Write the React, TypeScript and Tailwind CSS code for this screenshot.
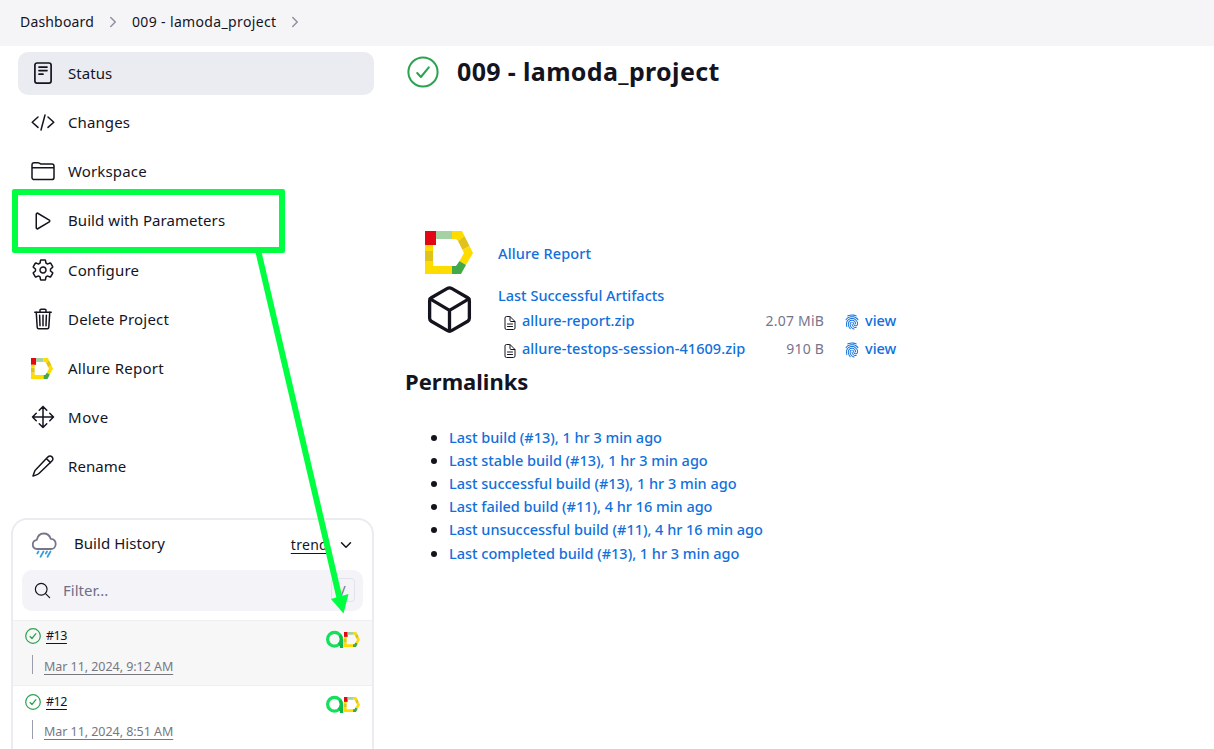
import type { ReactNode } from "react";
import {
  IoChevronDownOutline,
  IoChevronForwardOutline,
  IoCubeOutline,
  IoDocumentTextOutline,
  IoFingerPrint,
  IoMoveOutline,
  IoPlayOutline,
  IoSearchOutline,
  IoSettingsOutline,
  IoTrashOutline,
} from "react-icons/io5";

function StatusIcon() {
  return (
    <svg viewBox="0 0 24 24" className="size-6" fill="none" stroke="currentColor" strokeWidth="1.7" strokeLinecap="round" strokeLinejoin="round">
      <rect x="3.900" y="2" width="16.200" height="20.200" rx="2.200" />
      <path d="M8 6.100h8M8 9.600h8M8 13.200h4" />
    </svg>
  );
}

function ChangesIcon() {
  return (
    <svg viewBox="0 0 24 24" className="size-6" fill="none" stroke="currentColor" strokeWidth="1.5" strokeLinecap="round" strokeLinejoin="round">
      <path d="M7 7 1.200 12.200 7 17.400M17 7l5.800 5.200-5.800 5.200M14 5l-4 15" />
    </svg>
  );
}

function FolderIcon() {
  return (
    <svg viewBox="0 0 24 24" className="size-6" fill="none" stroke="currentColor" strokeWidth="1.5" strokeLinecap="round" strokeLinejoin="round">
      <path d="M1 8.700V5.900a2.200 2.200 0 0 1 2.200-2.200h3.600c.6 0 1 .1 1.500.5l.8.5c.5.3.9.4 1.500.4h10.200A2.200 2.200 0 0 1 23 7.300v11.100a2.200 2.200 0 0 1-2.200 2.200H3.200A2.200 2.200 0 0 1 1 18.400V8.700h22" />
    </svg>
  );
}

function PencilIcon() {
  return (
    <svg viewBox="0 0 24 24" className="size-6" fill="none" stroke="currentColor" strokeWidth="1.5" strokeLinecap="round" strokeLinejoin="round">
      <path d="M16.800 2.100c1.500-1.500 3-1.300 4.200-.2 1.200 1.200 1.300 2.700-.1 4.100L8.200 18.300c-.6.600-1.300 1-2.100 1.300L2 21.100l1.400-4.200c.3-.8.7-1.500 1.300-2.100ZM15.600 3.700l3.900 3.900" />
    </svg>
  );
}

function AllureIcon({ className }: { className: string }) {
  return (
    <svg viewBox="0 0 48 43" className={className} preserveAspectRatio="none">
      <path d="M0 0h11v14H0z" fill="#e30613" />
      <path d="M11 0h16v8H11z" fill="#a5d2a4" />
      <path d="M27 0h10l2.500 5-6.500 5-2-2h-4z" fill="#ffdc00" />
      <path d="m39.500 5 5 10-7 4-4.500-9z" fill="#dfc21a" />
      <path d="m44.500 15 3.500 7-7 12-6.500-4 4.500-8-1.500-3z" fill="#ffdc00" />
      <path d="m41 34-5 9H27v-8h4l3.500-5z" fill="#43a847" />
      <path d="M0 14h8v6H0zM0 30h8v5h19v8H0z" fill="#ffdc00" />
      <path d="M0 20h8v10H0z" fill="#dfc21a" />
    </svg>
  );
}

function SuccessIcon({ className, width }: { className: string; width: number }) {
  return (
    <svg viewBox="0 0 32 32" className={className} fill="none" stroke="#2aa34f" strokeWidth={width} strokeLinecap="round" strokeLinejoin="round">
      <circle cx="16" cy="16" r="14.600" />
      <path d="m10.200 17 3.700 4L21.800 11.300" />
    </svg>
  );
}

function RainIcon() {
  return (
    <svg viewBox="0 0 26 28" className="h-7 w-[26px]" fill="none" strokeLinecap="round" strokeLinejoin="round">
      <path d="M6 18C3 18 1.800 16 1.800 13.500c0-2.500 1.500-4.300 4-4.700C6.600 5 9 2.500 12.700 2.500c3.500 0 6 2.100 7 5.300 3.200.2 5 2.300 5 5.100 0 3-2 5.100-5 5.100Z" stroke="#77758c" strokeWidth="1.800" />
      <path d="m7.500 20.500-1.200 2M12.500 20.500l-3 5.300M16 20.500l-1.200 2M19.500 20.500l-3 5.300" stroke="#3aa0dc" strokeWidth="1.800" />
    </svg>
  );
}

function TestOpsIcon() {
  return (
    <svg viewBox="0 0 18 19" className="h-[19px] w-[18px]" fill="none">
      <circle cx="8.500" cy="9.300" r="6.900" stroke="#14e05c" strokeWidth="3.200" />
      <path d="M15.600 9.500V18" stroke="#0cb54b" strokeWidth="3.200" />
      <path d="M14 5.200a6.900 6.900 0 0 1-1.200 9.500" stroke="#0fbe4f" strokeWidth="3.200" />
    </svg>
  );
}

const tasks: { label: string; icon: ReactNode; tracking: string }[] = [
  { label: "Status", icon: <StatusIcon />, tracking: "tracking-[0.05px]" },
  { label: "Changes", icon: <ChangesIcon />, tracking: "tracking-[0.1px]" },
  { label: "Workspace", icon: <FolderIcon />, tracking: "tracking-[0.15px]" },
  { label: "Build with Parameters", icon: <IoPlayOutline className="size-6" />, tracking: "tracking-[0.07px]" },
  { label: "Configure", icon: <IoSettingsOutline className="size-6" />, tracking: "tracking-[0.15px]" },
  { label: "Delete Project", icon: <IoTrashOutline className="size-6" />, tracking: "tracking-[0.18px]" },
  { label: "Allure Report", icon: <AllureIcon className="h-[21px] w-[22px]" />, tracking: "tracking-[0.26px]" },
  { label: "Move", icon: <IoMoveOutline className="size-6" />, tracking: "tracking-[0.6px]" },
  { label: "Rename", icon: <PencilIcon />, tracking: "tracking-[0.05px]" },
];

const links = [
  "Last build (#13), 1 hr 3 min ago",
  "Last stable build (#13), 1 hr 3 min ago",
  "Last successful build (#13), 1 hr 3 min ago",
  "Last failed build (#11), 4 hr 16 min ago",
  "Last unsuccessful build (#11), 4 hr 16 min ago",
  "Last completed build (#13), 1 hr 3 min ago",
];

const artifacts = [
  { name: "allure-report.zip", size: "2.07 MiB" },
  { name: "allure-testops-session-41609.zip", size: "910 B" },
];

function Build({ name, date, shaded }: { name: string; date: string; shaded?: boolean }) {
  return (
    <div className={`flex h-[65.500px] shrink-0 justify-between border-t border-[#efeff2] pr-[12px] pl-[12px] ${shaded ? "bg-[#f7f7f7]" : ""}`}>
      <div className="flex flex-col">
        <div className="mt-[6px] flex h-[19px] items-center gap-[5px]">
          <SuccessIcon className="size-4" width={2.4} />
          <span className="mt-px text-[12.500px] tracking-[-0.5px] underline underline-offset-[3px]">{name}</span>
        </div>
        <div className="mt-[8px] flex h-[24px] items-center pl-[7px]">
          <span className="mb-[3px] h-[19px] w-px bg-[#9c9caa]" />
          <span className="mt-[3px] ml-[11px] text-[12.500px] tracking-[-0.05px] text-[#77777f] underline underline-offset-[3px]">{date}</span>
        </div>
      </div>
      <div className="mt-[9px] flex h-[19px] items-center">
        <TestOpsIcon />
        <AllureIcon className="h-[15px] w-4" />
      </div>
    </div>
  );
}

export default function App() {
  return (
    <div className="relative flex h-[749px] w-[1214px] flex-col overflow-hidden bg-white font-['Noto_Sans',sans-serif] text-[15px] text-[#14141f]">
      <header className="flex h-[46px] shrink-0 items-center bg-[#f5f5f8] pb-[3px] pl-[20px] text-[14px]">
        <span className="tracking-[0.17px]">Dashboard</span>
        <IoChevronForwardOutline className="mx-[11px] size-4 text-[#8f8fa3]" />
        <span className="tracking-[0.35px]">009 - lamoda_project</span>
        <IoChevronForwardOutline className="mx-[11px] size-4 text-[#8f8fa3]" />
      </header>
      <div className="flex min-h-0 flex-1">
        <aside className="flex w-[374px] shrink-0 flex-col pt-[6px]">
          <nav className="flex flex-col gap-[6.200px] pl-[18px]">
            {tasks.map((t, i) => (
              <a key={t.label} className={`flex h-[43px] items-center rounded-[10px] pl-[13px] ${i === 0 ? "bg-[#ebecf2]" : ""}`}>
                <div className="flex w-[37px] items-center pb-px">{t.icon}</div>
                <span className={`pb-px ${t.tracking}`}>{t.label}</span>
              </a>
            ))}
          </nav>
          <section className="mt-[29.200px] ml-[11px] flex h-[260px] w-[363px] shrink-0 flex-col rounded-t-2xl border-2 border-[#ebebf0]">
            <div className="flex h-[50px] items-center pr-[18px] pl-[18px]">
              <RainIcon />
              <span className="ml-[17px] pb-[2px] tracking-[0.05px]">Build History</span>
              <span className="ml-auto pb-px text-[14px] tracking-[0.3px] underline underline-offset-[3px]">trend</span>
              <IoChevronDownOutline className="ml-[10px] size-4" />
            </div>
            <div className="mx-[9px] flex h-[41px] items-center rounded-[10px] bg-[#f3f3f8] pr-[8px] pl-[11px]">
              <IoSearchOutline className="size-[19px]" />
              <span className="mt-px ml-[11px] text-[#6f6e88]">Filter...</span>
              <div className="ml-auto flex size-6 items-center justify-center rounded-[4px] border border-[#e2e2ea] text-[14px] text-[#6f6e88]">/</div>
            </div>
            <div className="mt-[9px] flex flex-col">
              <Build name="#13" date="Mar 11, 2024, 9:12 AM" shaded />
              <Build name="#12" date="Mar 11, 2024, 8:51 AM" />
            </div>
          </section>
        </aside>
        <main className="flex flex-col pl-[31px]">
          <div className="mt-[6px] flex h-[40px] items-center pl-[2px]">
            <SuccessIcon className="size-8" width={2} />
            <h1 className="ml-[18px] text-[25px] font-bold tracking-[0.350px]">009 - lamoda_project</h1>
          </div>
          <div className="mt-[139px] flex h-[43px] items-center pl-[20px]">
            <AllureIcon className="h-[43px] w-[48px]" />
            <a className="mt-[2px] ml-[25px] text-[14.500px] font-medium tracking-[0.15px] text-[#1070dc]">Allure Report</a>
          </div>
          <div className="mt-[10px] flex pl-[18px]">
            <IoCubeOutline className="-mt-px size-[53px]" />
            <div className="ml-[22px] flex flex-col text-[14.500px] font-medium text-[#1070dc]">
              <a className="h-[23px] leading-[23px]">Last Successful Artifacts</a>
              {artifacts.map((a) => (
                <div key={a.name} className="flex h-[28px] w-[399px] items-center pb-px pl-[4px]">
                  <IoDocumentTextOutline className="mt-[5px] size-4 text-[#14141f]" />
                  <a className="ml-[4px] tracking-[0.06px]">{a.name}</a>
                  <span className="ml-auto pb-px text-[14px] font-normal tracking-[0.2px] text-[#77758c]">{a.size}</span>
                  <IoFingerPrint className="mt-[3px] ml-[20px] size-4" />
                  <a className="ml-[5px] w-[32px]">view</a>
                </div>
              ))}
            </div>
          </div>
          <h2 className="mt-px text-[22px] leading-[34px] font-bold">Permalinks</h2>
          <ul className="mt-[28px] flex flex-col">
            {links.map((l) => (
              <li key={l} className="flex h-[23.200px] items-center pl-[26px]">
                <div className="size-[6px] rounded-full bg-[#14141f]" />
                <a className="ml-[12px] text-[14.500px] font-medium tracking-[-0.02px] text-[#1070dc]">{l}</a>
              </li>
            ))}
          </ul>
        </main>
      </div>
      <div className="absolute top-[189px] left-[12px] h-[64px] w-[273px] rounded-[2px] border-6 border-[#00ff41]" />
      <svg className="absolute top-0 left-0 h-[749px] w-[400px]" viewBox="0 0 400 749">
        <path d="M258 250 340 600" stroke="#00ff41" strokeWidth="6" />
        <path d="m331 599 17.500-5L343.500 613.500z" fill="#00ff41" />
      </svg>
    </div>
  );
}
